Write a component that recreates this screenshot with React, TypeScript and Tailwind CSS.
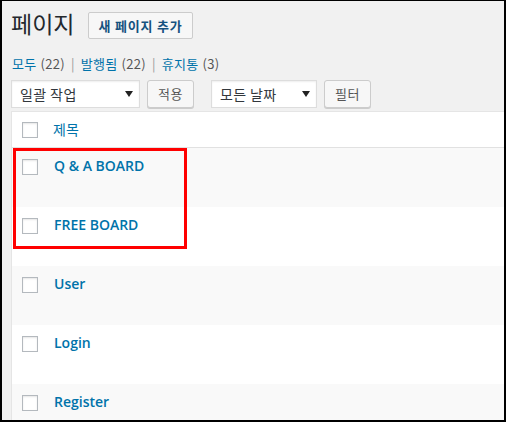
import React from "react";

const ko = "font-['Noto_Sans_CJK_KR',sans-serif]";
const latin = "font-['Open_Sans','Noto_Sans_CJK_KR',sans-serif]";

const rows = ["Q & A BOARD", "FREE BOARD", "User", "Login", "Register"];

function Checkbox({ className = "" }: { className?: string }) {
  return (
    <span
      className={`block w-4 h-4 shrink-0 bg-white border border-[#b4b9be] shadow-[inset_0_1px_2px_rgba(0,0,0,0.1)] ${className}`}
    />
  );
}

function Select({ label, width }: { label: string; width: string }) {
  return (
    <div
      className={`${width} h-[28px] flex items-center justify-between pl-[8px] pr-[6px] bg-white border border-[#ddd] shadow-[inset_0_1px_2px_rgba(0,0,0,0.07)] text-[14px] tracking-[0.4px] text-[#32373c] ${ko}`}
    >
      <span>{label}</span>
      <svg width="8" height="6" viewBox="0 0 8 6">
        <path d="M0 0 L8 0 L4 6 Z" fill="#222" />
      </svg>
    </div>
  );
}

function Button({ label }: { label: string }) {
  return (
    <div
      className={`h-[28px] px-[10px] flex items-center bg-[#f7f7f7] border border-[#ccc] rounded-[3px] shadow-[0_1px_0_#ccc] text-[13px] tracking-[0.5px] text-[#555] ${ko}`}
    >
      {label}
    </div>
  );
}

export default function App() {
  return (
    <div className="relative w-[506px] h-[422px] overflow-hidden bg-[#f1f1f1] border-t border-x-2 border-b-2 border-black">
      <div className="pl-[9px]">
        {/* Title */}
        <div className="mt-[11px] h-[27px] flex items-center">
          <h1 className={`text-[23px] text-[#23282d] leading-[27px] pb-[4px] ${ko}`}>페이지</h1>
          <span
            className={`ml-[14px] h-[27px] px-[9px] flex items-center bg-[#f7f7f7] border border-[#ccc] rounded-[2px] text-[13px] font-semibold tracking-[0.8px] text-[#15527f] ${ko}`}
          >
            새 페이지 추가
          </span>
        </div>

        {/* Status links */}
        <div className={`mt-[15px] h-[20px] flex items-center pl-[1px] text-[13px] tracking-[0.3px] ${ko}`}>
          <span className="text-[#0073aa]">모두</span>
          <span className="ml-[4px] text-[#555]">(22)</span>
          <span className="mx-[6px] text-[#999]">|</span>
          <span className="text-[#0073aa]">발행됨</span>
          <span className="ml-[4px] text-[#555]">(22)</span>
          <span className="mx-[6px] text-[#999]">|</span>
          <span className="text-[#0073aa]">휴지통</span>
          <span className="ml-[4px] text-[#555]">(3)</span>
        </div>

        {/* Toolbar */}
        <div className="mt-[6px] flex items-center">
          <Select label="일괄 작업" width="w-[129px]" />
          <div className="ml-[7px]">
            <Button label="적용" />
          </div>
          <div className="ml-[17px]">
            <Select label="모든 날짜" width="w-[106px]" />
          </div>
          <div className="ml-[7px]">
            <Button label="필터" />
          </div>
        </div>

        {/* Table */}
        <div className="mt-[3px] w-[540px] bg-white border border-[#e5e5e5]">
          <div className="h-[36px] flex items-center border-b border-[#e1e1e1]">
            <Checkbox className="ml-[10px]" />
            <span className={`ml-[15px] text-[14px] text-[#0073aa] ${ko}`}>제목</span>
          </div>
          {rows.map((r, i) => (
            <div
              key={r}
              className={`h-[59px] flex items-start pt-[8px] ${i % 2 === 0 ? "bg-[#f9f9f9]" : "bg-white"}`}
            >
              <Checkbox className="ml-[10px] mt-[3px]" />
              <span className={`ml-[16px] text-[14px] leading-[20px] font-semibold text-[#0073aa] ${latin}`}>
                {r}
              </span>
            </div>
          ))}
        </div>
      </div>

      {/* red highlight */}
      <div className="absolute left-[11px] top-[147px] w-[174px] h-[101px] border-[3px] border-[#f00]" />
    </div>
  );
}
